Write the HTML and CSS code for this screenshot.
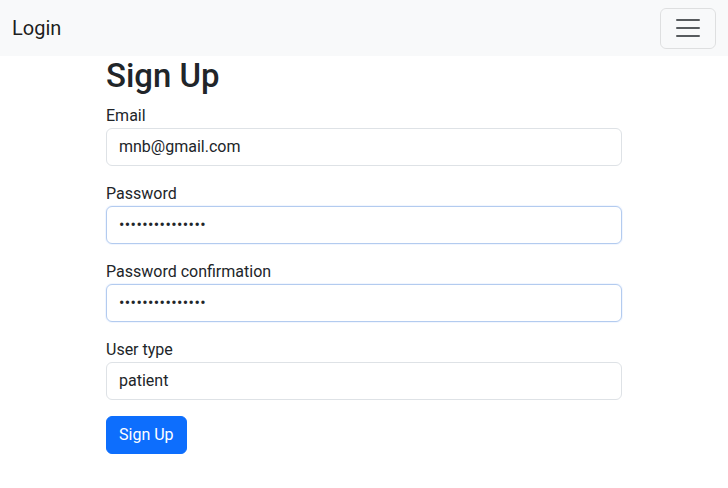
FILE: index.html
```html
<!DOCTYPE html>
<html lang="en">
<head>
<meta charset="utf-8">
<title>Sign Up</title>
<link rel="stylesheet" href="styles.css">
</head>
<body>
<nav class="navbar">
  <a class="brand" href="#">Login</a>
  <button class="toggler" type="button" aria-label="Toggle navigation">
    <svg class="toggler-icon" viewBox="0 0 30 30" width="30" height="30"><path stroke="rgba(33,37,41,0.75)" stroke-linecap="round" stroke-miterlimit="10" stroke-width="2" d="M4 7h22M4 15h22M4 23h22"/></svg>
  </button>
</nav>
<main class="container">
  <h1 class="title">Sign Up</h1>
  <form class="form">
    <div class="field">
      <label class="label" for="email">Email</label>
      <input class="control" id="email" type="email" value="mnb@gmail.com">
    </div>
    <div class="field">
      <label class="label" for="pw">Password</label>
      <input class="control filled secret" id="pw" type="password" value="abcdefghijklmno">
    </div>
    <div class="field">
      <label class="label" for="pwc">Password confirmation</label>
      <input class="control filled secret" id="pwc" type="password" value="abcdefghijklmno">
    </div>
    <div class="field">
      <label class="label" for="ut">User type</label>
      <input class="control" id="ut" type="text" value="patient">
    </div>
    <button class="btn" type="submit">Sign Up</button>
  </form>
</main>
</body>
</html>
```
FILE: styles.css
```css
*{box-sizing:border-box;}
body{margin:0;font-family:Roboto,"Liberation Sans",sans-serif;font-size:16px;line-height:1.5;color:#212529;background:#fff;}
.navbar{display:flex;align-items:center;justify-content:space-between;height:56px;padding:8px 12px;background:#f8f9fa;}
.brand{font-size:20px;line-height:30px;padding:5px 0;color:rgba(0,0,0,.9);text-decoration:none;}
.toggler{display:flex;align-items:center;justify-content:center;width:56px;height:41px;padding:4px 12px;background:transparent;border:1px solid rgba(0,0,0,.1);border-radius:6px;}
.toggler-icon{display:block;}
.container{width:540px;margin:0 auto;padding:0 12px;}
.title{margin:0 0 8px;font-size:32.92px;font-weight:500;line-height:1.2;}
.form{display:flex;flex-direction:column;align-items:flex-start;}
.field{width:100%;margin-bottom:16px;}
.label{display:block;}
.control{display:block;width:100%;height:38px;padding:6px 12px;font-family:inherit;font-size:16px;line-height:1.5;color:#212529;background:#fff;border:1px solid #dee2e6;border-radius:6px;outline:none;}
.control.filled{border-color:#b3cbef;box-shadow:0 0 0 1px rgba(13,110,253,.06);}
.control.secret{letter-spacing:0.4px;}
.btn{height:38px;padding:6px 12px;font-family:inherit;font-size:16px;line-height:1.5;color:#fff;background:#0d6efd;border:1px solid #0d6efd;border-radius:6px;}
```
